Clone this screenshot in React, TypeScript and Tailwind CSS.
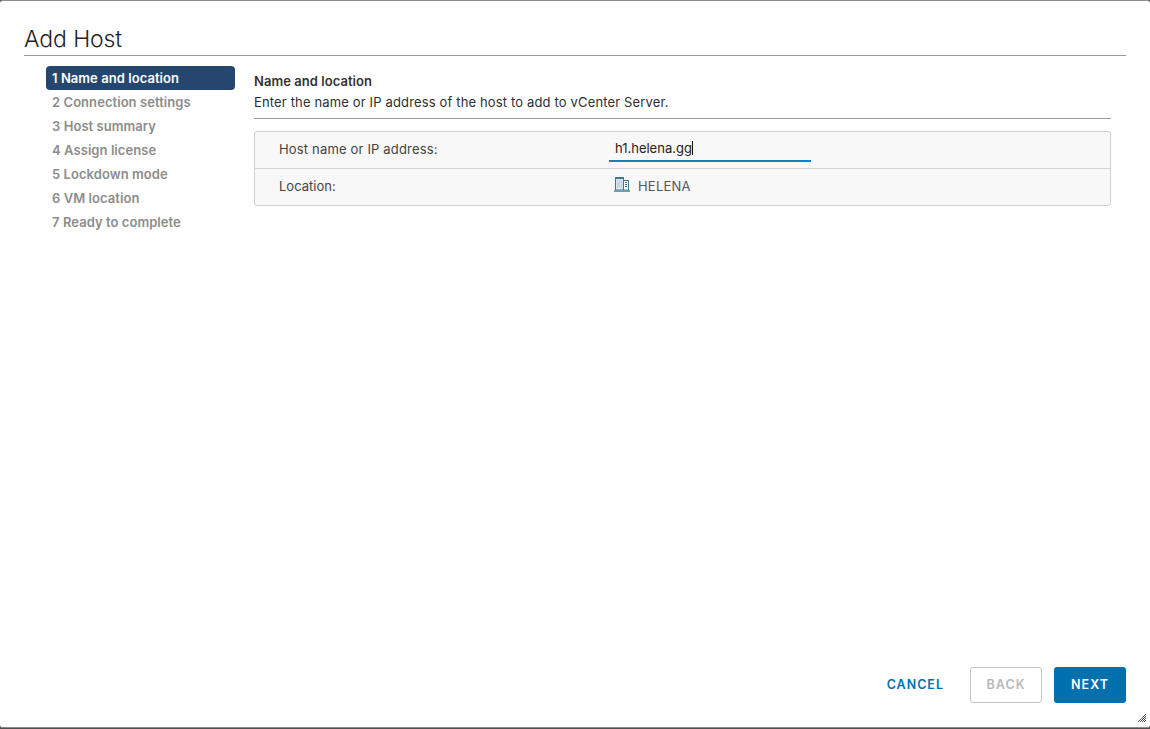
import React from "react";

const steps = ["1 Name and location","2 Connection settings","3 Host summary","4 Assign license","5 Lockdown mode","6 VM location","7 Ready to complete"];

function DatacenterIcon() {
  return (
    <svg width="16" height="15" viewBox="0 0 16 15" className="block">
      <rect x="1.5" y="0.5" width="8" height="12.5" fill="#dfe9ef" stroke="#3f7695" />
      <rect x="1" y="0" width="9" height="2" fill="#3f7695" />
      <path d="M3 4h5M3 6h5M3 8h5M3 10h5" stroke="#8fb0c4" strokeWidth="1" strokeDasharray="1 1" />
      <rect x="9.5" y="3.5" width="5" height="9.5" fill="#fff" stroke="#3f7695" />
      <path d="M11 5.5h2M11 7.5h2M11 9.5h2" stroke="#3f7695" strokeWidth="1" />
      <rect x="0" y="13" width="16" height="2" fill="#6f9db6" />
    </svg>
  );
}

export default function App() {
  return (
    <div className="w-[1150px] h-[729px] bg-[#4f4f4f] overflow-hidden font-['Inter','Liberation_Sans',sans-serif]">
      <div className="relative flex flex-col w-full h-[728px] bg-white rounded-[3px] border-t border-b border-[#8c8c8c] text-[#313131]">
        <header className="px-6 pt-[24px]">
          <h1 className="h-[28px] text-[23px] leading-[28px] font-light text-[#1f1f1f] tracking-[-0.1px]">Add Host</h1>
          <div className="mt-[2px] border-b border-[#9a9a9a]" />
        </header>
        <div className="flex flex-1 pl-[46px] pr-[39px] pt-[10px]">
          <nav className="w-[189px] shrink-0 flex flex-col">
            {steps.map((s, i) => (
              <div key={s} className={`h-[24px] pl-[6px] pt-[1px] flex items-center rounded-[4px] text-[13px] tracking-[0.06px] font-semibold ${i === 0 ? "bg-[#25476f] text-white" : "text-[#8c8c8c]"}`}>{s}</div>
            ))}
          </nav>
          <main className="flex-1 ml-[19px]">
            <div className="border-b border-[#9a9a9a] h-[53px] pt-[7px]">
              <h2 className="text-[13px] tracking-[0.05px] leading-[16px] font-semibold text-[#333]">Name and location</h2>
              <p className="mt-[5px] text-[13px] tracking-[0.15px] leading-[16px] text-[#2f2f2f]">Enter the name or IP address of the host to add to vCenter Server.</p>
            </div>
            <div className="mt-[12px] border border-[#d0d0d0] rounded-[3px] bg-[#f8f8f8] text-[13px]">
              <div className="h-[37px] flex items-start border-b border-[#d5d5d5]">
                <div className="w-[354px] pl-[24px] pt-[9px] leading-[16px] tracking-[0.17px] text-[#444]">Host name or IP address:</div>
                <div className="w-[202px] h-[30px] flex items-start pt-[8px] leading-[16px] px-[6px] border-b-2 border-[#0b84c6] text-[#222]">
                  h1.helena.gg<span className="inline-block w-px h-[14px] mt-[1px] bg-[#111]" />
                </div>
              </div>
              <div className="h-[36px] flex items-start">
                <div className="w-[354px] pl-[24px] pt-[9px] leading-[16px] text-[#444]">Location:</div>
                <div className="flex items-start pl-[5px] text-[#565656]">
                  <div className="pt-[8px]"><DatacenterIcon /></div>
                  <span className="ml-[8px] pt-[9px] leading-[16px] tracking-[0.2px]">HELENA</span>
                </div>
              </div>
            </div>
          </main>
        </div>
        <footer className="flex justify-end items-center pr-6 pb-[24px] text-[12.5px] font-semibold tracking-[1px]">
          <button className="text-[#0071ad] mr-[26px]">CANCEL</button>
          <button className="w-[72px] h-[36px] mr-[12px] border border-[#c4c4c4] rounded-[3px] text-[#b8b8b8]">BACK</button>
          <button className="w-[72px] h-[36px] rounded-[3px] bg-[#0070ae] text-white">NEXT</button>
        </footer>
        <svg width="8" height="8" viewBox="0 0 8 8" className="absolute right-[4px] bottom-[5px]">
          <path d="M0 8L8 0M2 8l6-6M4 8l4-4M6 8l2-2" stroke="#555" strokeWidth="1" />
        </svg>
      </div>
    </div>
  );
}
